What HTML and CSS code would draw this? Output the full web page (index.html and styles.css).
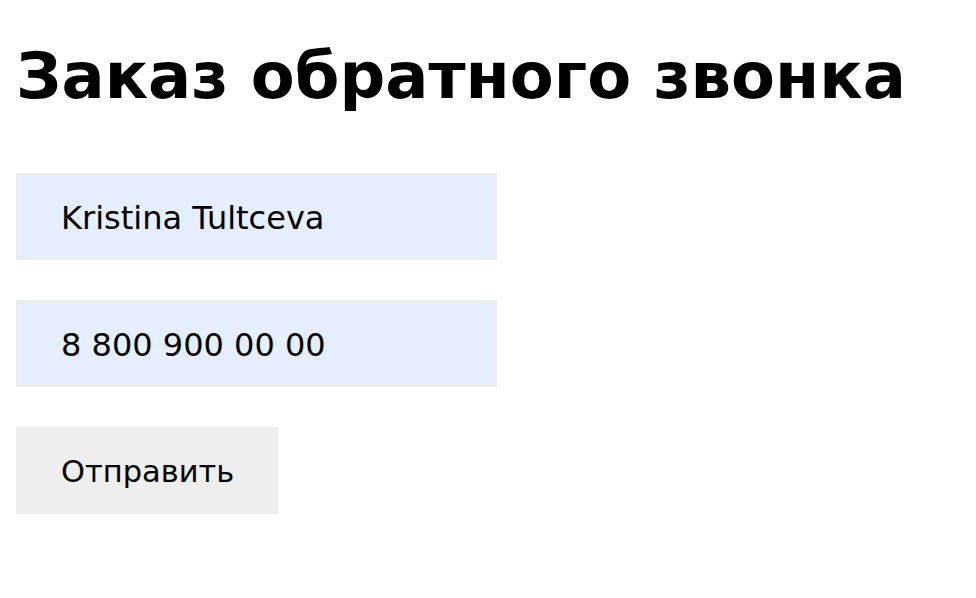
FILE: index.html
```html
<!DOCTYPE html>
<html lang="ru">
<head>
<meta charset="utf-8">
<title>Заказ обратного звонка</title>
<link rel="stylesheet" href="styles.css">
</head>
<body>
<h1 class="title">Заказ обратного звонка</h1>
<form class="form">
  <input class="field" type="text" value="Kristina Tultceva">
  <input class="field" type="text" value="8 800 900 00 00">
  <button class="submit" type="button">Отправить</button>
</form>
</body>
</html>
```
FILE: styles.css
```css
html, body {
  margin: 0;
  padding: 0;
  background: #fff;
}
body {
  padding: 16px;
  font-family: "DejaVu Sans", Verdana, sans-serif;
  color: #000;
}
.title {
  margin: 22px 0 59px;
  font-size: 64px;
  line-height: 76px;
  font-weight: bold;
}
.form {
  display: flex;
  flex-direction: column;
  align-items: flex-start;
  gap: 40px;
}
.field {
  box-sizing: border-box;
  width: 481px;
  height: 87px;
  padding: 2px 0 0 42px;
  border: 3px solid #ececec;
  background: #e5efff;
  font-family: "DejaVu Sans", Verdana, sans-serif;
  font-size: 32px;
  color: #000;
  outline: none;
}
.submit {
  box-sizing: border-box;
  width: 262px;
  height: 87px;
  padding: 2px 0 0 45px;
  text-align: left;
  border: none;
  background: #eeeeee;
  font-family: "DejaVu Sans", Verdana, sans-serif;
  font-size: 30.5px;
  color: #000;
}
```
